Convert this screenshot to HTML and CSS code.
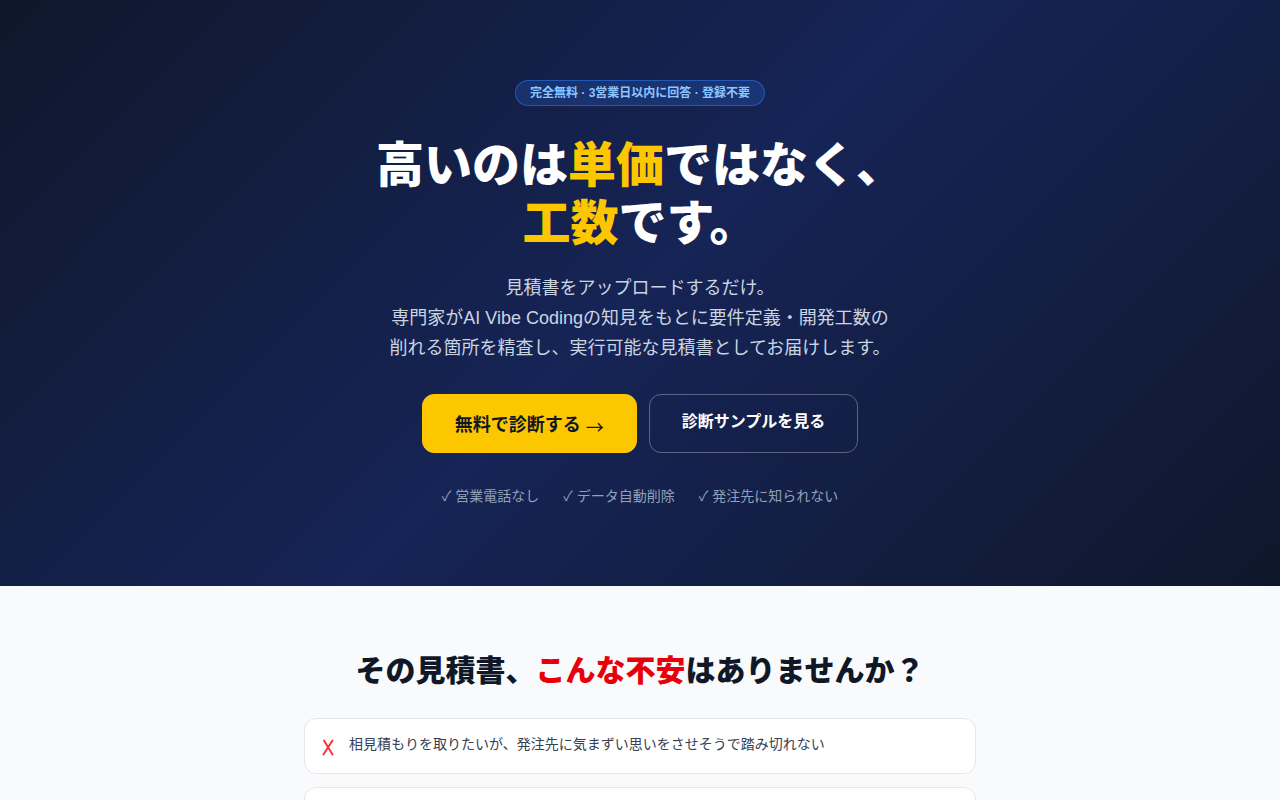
FILE: index.html
```html
<!DOCTYPE html>
<html lang="ja">
<head>
<meta charset="utf-8">
<title>見積書診断</title>
<link rel="stylesheet" href="styles.css">
</head>
<body>
<section class="hero">
  <div class="hero-inner">
    <div class="badge">完全無料 · 3営業日以内に回答 · 登録不要</div>
    <h1 class="hero-title">高いのは<span class="accent">単価</span>ではなく、<br><span class="accent">工数</span>です。</h1>
    <p class="hero-lead">見積書をアップロードするだけ。<br>専門家がAI Vibe Codingの知見をもとに要件定義・開発工数の<br>削れる箇所を精査し、実行可能な見積書としてお届けします。</p>
    <div class="cta-row">
      <a class="btn btn-primary" href="#">無料で診断する <span class="arrow">→</span></a>
      <a class="btn btn-outline" href="#">診断サンプルを見る</a>
    </div>
    <ul class="checks">
      <li>✓ 営業電話なし</li>
      <li>✓ データ自動削除</li>
      <li>✓ 発注先に知られない</li>
    </ul>
  </div>
</section>
<section class="worries">
  <h2 class="worries-title">その見積書、<span class="red">こんな不安</span>はありませんか？</h2>
  <div class="cards">
    <div class="card"><svg class="x" width="12" height="17" viewBox="0 0 12 17" aria-hidden="true"><path d="M2 1.5 L10.5 15.5 M10.5 1.5 Q6.5 7.5 1.5 15.5" fill="none" stroke="#fb2c36" stroke-width="1.9" stroke-linecap="round"/></svg><span class="card-text">相見積もりを取りたいが、発注先に気まずい思いをさせそうで踏み切れない</span></div>
    <div class="card"><svg class="x" width="12" height="17" viewBox="0 0 12 17" aria-hidden="true"><path d="M2 1.5 L10.5 15.5 M10.5 1.5 Q6.5 7.5 1.5 15.5" fill="none" stroke="#fb2c36" stroke-width="1.9" stroke-linecap="round"/></svg><span class="card-text">提示された工数が妥当なのか、社内に判断できる人がいない</span></div>
  </div>
</section>
</body>
</html>
```
FILE: styles.css
```css
* { box-sizing: border-box; }
html, body { margin: 0; padding: 0; }
body {
  font-family: "Liberation Sans", "Noto Sans CJK JP", sans-serif;
  background: #f8fafc;
  color: #101828;
}
.hero {
  background: linear-gradient(135deg, #0f172b 0%, #162456 50%, #0f172b 100%);
  padding: 80px 16px 80px;
  text-align: center;
}
.hero-inner {
  display: flex;
  flex-direction: column;
  align-items: center;
}
.badge {
  display: inline-block;
  font-size: 12px;
  line-height: 16px;
  font-weight: 700;
  color: #8ec5ff;
  background: rgba(43, 127, 255, 0.2);
  border: 1px solid rgba(43, 127, 255, 0.5);
  border-radius: 9999px;
  padding: 4px 14px;
  margin-bottom: 27px;
}
.hero-title {
  margin: 0 0 25px;
  font-family: "Noto Sans CJK JP", sans-serif;
  font-size: 48px;
  line-height: 57.6px;
  font-weight: 900;
  color: #ffffff;
}
.accent { color: #fdc700; }
.hero-lead {
  margin: 0 0 31px;
  font-size: 18px;
  line-height: 30px;
  color: #cad5e2;
}
.cta-row {
  display: flex;
  gap: 12px;
  justify-content: center;
  margin-bottom: 33px;
}
.btn {
  display: inline-flex;
  align-items: center;
  justify-content: center;
  text-decoration: none;
  font-weight: 700;
  border-radius: 12px;
  padding: 15px 32px;
}
.btn-primary {
  background: #fdc700;
  color: #101828;
  font-size: 18px;
  line-height: 28px;
  height: 59px;
  border: 1px solid #fdc700;
  padding-top: 16px;
  padding-bottom: 14px;
  white-space: pre;
}
.arrow {
  display: inline-block;
  font-family: "Noto Sans CJK JP", sans-serif;
  font-weight: 400;
  line-height: 20px;
  margin-top: 3px;
}
.btn-outline {
  color: #ffffff;
  font-size: 16px;
  line-height: 24px;
  height: 59px;
  border: 1px solid rgba(255, 255, 255, 0.3);
  padding-bottom: 19px;
}
.checks {
  list-style: none;
  margin: 0;
  padding: 0;
  display: flex;
  gap: 24px;
  justify-content: center;
  font-size: 14px;
  line-height: 20px;
  color: #90a1b9;
}
.worries {
  padding: 64px 16px 40px;
}
.worries-title {
  margin: 0 0 32px;
  text-align: center;
  font-family: "Noto Sans CJK JP", sans-serif;
  font-size: 30px;
  line-height: 36px;
  font-weight: 900;
  color: #101828;
}
.red { color: #e7000b; }
.cards {
  max-width: 672px;
  margin: 0 auto;
  display: flex;
  flex-direction: column;
  gap: 13px;
}
.card {
  display: flex;
  align-items: flex-start;
  gap: 15px;
  background: #ffffff;
  border: 1px solid #e5e7eb;
  border-radius: 12px;
  padding: 15px 16px 15px 17px;
  min-height: 56px;
}
.x {
  display: block;
  margin-top: 5px;
  flex: none;
}
.card-text {
  font-size: 14px;
  line-height: 20px;
  color: #364153;
}
```
